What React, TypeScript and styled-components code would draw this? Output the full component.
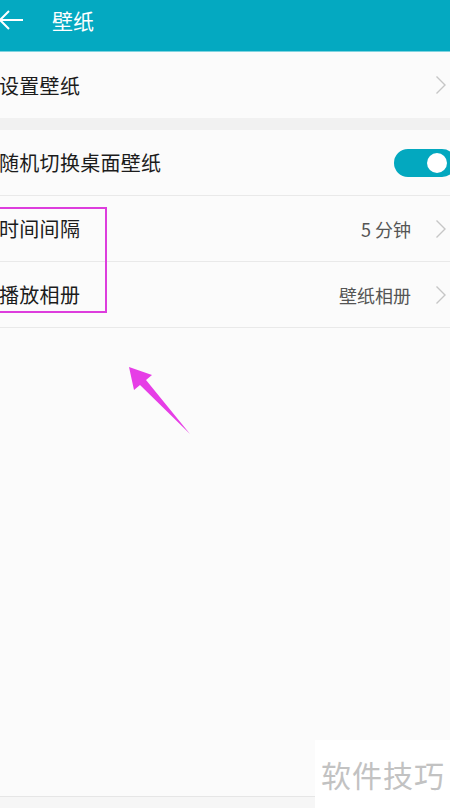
import styled, { createGlobalStyle } from "styled-components"

const GlobalStyle = createGlobalStyle`
  html, body {
    margin: 0;
    padding: 0;
    background: #fbfbfb;
  }
  * {
    box-sizing: border-box;
  }
`

type RowItem = {
  label: string
  value?: string
  toggle?: boolean
}

const wallpaperRows: RowItem[] = [
  { label: "随机切换桌面壁纸", toggle: true },
  { label: "时间间隔", value: "5 分钟" },
  { label: "播放相册", value: "壁纸相册" },
]

const Chevron = () => (
  <svg width="12" height="20" viewBox="0 0 12 20">
    <path d="M1.5 1.5 L10 10 L1.5 18.5" fill="none" stroke="#c6c6c6" strokeWidth="1.4" />
  </svg>
)

const BackArrow = () => (
  <svg width="26" height="22" viewBox="0 0 26 22">
    <path d="M25 11 H2 M11 2 L2 11 L11 20" fill="none" stroke="#fff" strokeWidth="2" />
  </svg>
)

export default function App() {
  return (
    <>
      <GlobalStyle />
      <Page>
        <Header>
          <BackArrow />
          <Title>壁纸</Title>
        </Header>

        <Group>
          <Row>
            <Label>设置壁纸</Label>
            <Right>
              <Chevron />
            </Right>
          </Row>
        </Group>

        <Band />

        <Group>
          {wallpaperRows.map((row) => (
            <Row key={row.label} divided>
              <Label>{row.label}</Label>
              <Right>
                {row.value && <Value>{row.value}</Value>}
                {row.toggle ? (
                  <Switch>
                    <Knob />
                  </Switch>
                ) : (
                  <Chevron />
                )}
              </Right>
            </Row>
          ))}
        </Group>

        <Filler />
        <BottomBar />

        <Highlight />
        <Pointer width="450" height="808" viewBox="0 0 450 808">
          <polygon
            points="129,367 152,375 146,380 190,434 140,385 134,390"
            fill="#e63ee6"
          />
        </Pointer>
        <Watermark>软件技巧</Watermark>
      </Page>
    </>
  )
}

const Page = styled.div`
  position: relative;
  width: 450px;
  height: 808px;
  overflow: hidden;
  display: flex;
  flex-direction: column;
  background: #fbfbfb;
  font-family: "Noto Sans CJK SC", "Noto Sans", sans-serif;
`

const Header = styled.header`
  height: 52px;
  flex-shrink: 0;
  display: flex;
  align-items: flex-start;
  gap: 28px;
  padding-top: 7px;
  background: #04a9c1;
  border-bottom: 1px solid #7fd3df;
  svg {
    margin-left: -2px;
    margin-top: 2px;
  }
`

const Title = styled.h1`
  margin: 0;
  color: #fff;
  font-size: 21px;
  line-height: 26px;
  font-weight: 400;
`

const Group = styled.section`
  display: flex;
  flex-direction: column;
  background: #fbfbfb;
`

const Row = styled.div<{ divided?: boolean }>`
  height: 66px;
  display: flex;
  align-items: center;
  justify-content: space-between;
  padding: 0 3px 0 0;
  border-bottom: ${(p) => (p.divided ? "1px solid #e9e9e9" : "none")};
`

const Label = styled.span`
  margin-left: -1px;
  color: #1c1c1c;
  font-size: 20px;
  letter-spacing: 0.3px;
`

const Right = styled.div`
  display: flex;
  align-items: center;
  gap: 24px;
`

const Value = styled.span`
  color: #555;
  font-size: 18px;
`

const Switch = styled.div`
  width: 62px;
  height: 28px;
  margin-right: -9px;
  border-radius: 14px;
  background: #03a8bf;
  display: flex;
  align-items: center;
  justify-content: flex-end;
  padding-right: 3px;
`

const Knob = styled.span`
  width: 20px;
  height: 20px;
  margin-right: 6px;
  border-radius: 50%;
  background: #fff;
`

const Band = styled.div`
  height: 12px;
  background: #f1f1f1;
`

const Filler = styled.div`
  flex: 1;
`

const BottomBar = styled.div`
  height: 12px;
  border-top: 1px solid #e6e6e6;
  background: #f6f6f6;
`

const Highlight = styled.div`
  position: absolute;
  left: -4px;
  top: 207px;
  width: 111px;
  height: 106px;
  border: 2px solid #dd3ddd;
`

const Pointer = styled.svg`
  position: absolute;
  left: 0;
  top: 0;
  pointer-events: none;
`

const Watermark = styled.div`
  position: absolute;
  right: 0;
  bottom: 0;
  width: 135px;
  height: 68px;
  padding-left: 6px;
  display: flex;
  align-items: center;
  background: #fff;
  color: #c2c2c2;
  font-size: 30px;
  letter-spacing: 1px;
`
